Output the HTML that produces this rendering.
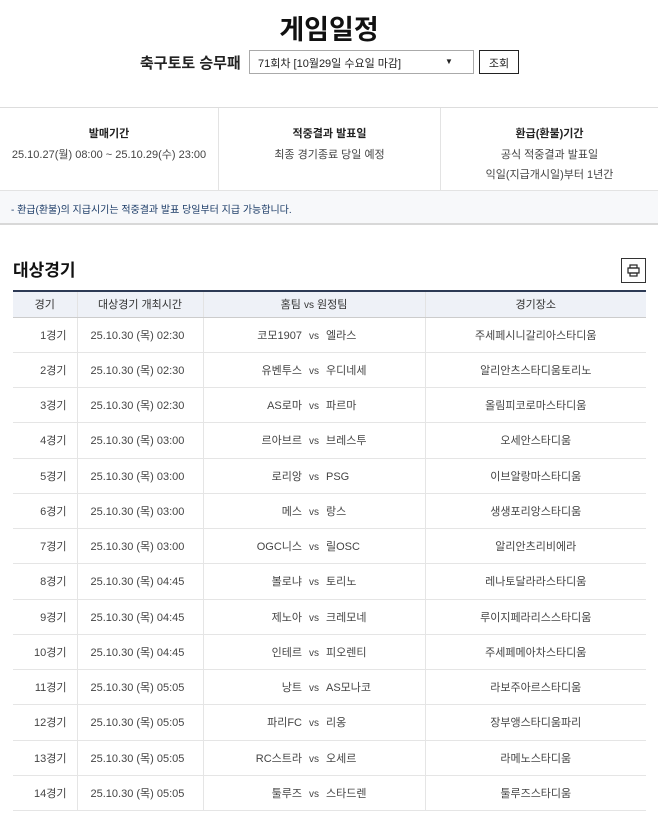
<!DOCTYPE html>
<html><head><meta charset="utf-8">
<style>
*{margin:0;padding:0;box-sizing:border-box}
body{width:658px;height:814px;overflow:hidden;background:#fff;font-family:"Liberation Sans","Noto Sans CJK KR",sans-serif;color:#333;font-size:11px}
h1{position:absolute;top:8px;left:0;width:658px;text-align:center;font-size:27px;font-weight:bold;color:#111}
.info{position:absolute;top:107px;left:0;width:658px;height:83px;border-top:1px solid #ddd;display:flex}
.info div{flex:none;text-align:center;padding-top:16px;line-height:20px;color:#444}
.info b{display:block;color:#222;margin-bottom:1px}
.note{position:absolute;top:190px;left:0;width:658px;height:35px;background:#f7f8fa;border-top:1px solid #e3e3e3;border-bottom:2px solid #d8d8d8;padding:10px 0 0 11px;font-size:10px;color:#1a3a66}
h2{position:absolute;top:256px;left:13px;font-size:17px;font-weight:bold;color:#111}
.pr{position:absolute;left:621px;top:258px;width:25px;height:25px;border:1px solid #333;background:#fff}
table{position:absolute;top:290px;left:13px;width:633px;border-collapse:collapse;table-layout:fixed}
th{background:#eef1f7;height:26px;font-weight:normal;color:#333;border-top:2px solid #2d3a55;border-left:1px solid #e3e3e3;border-bottom:1px solid #ccc}
td{height:35.25px;border-bottom:1px solid #e5e5e5;border-left:1px solid #e5e5e5;text-align:center;color:#444}
th:first-child,td:first-child{border-left:none}
td:first-child{text-align:right;padding-right:10px}
td:nth-child(2){text-align:left;padding-left:13px}
.h{display:inline-block;width:97px;text-align:right}.v{display:inline-block;width:24px;text-align:center;font-size:10px}.a{display:inline-block;width:97px;text-align:left}
</style></head><body>
<h1>게임일정</h1>
<div style="position:absolute;top:52px;left:140px;font-size:15px;font-weight:bold;color:#222">축구토토 승무패</div>
<div style="position:absolute;top:50px;left:249px;width:225px;height:24px;border:1px solid #aaa;padding:4px 0 0 8px;color:#222">71회차 [10월29일 수요일 마감]<span style="position:absolute;left:195px;top:6px;font-size:8px">▼</span></div>
<div style="position:absolute;top:50px;left:479px;width:40px;height:24px;border:1px solid #222;text-align:center;padding-top:4px;color:#222">조회</div>
<div class="info">
<div style="width:219px;border-right:1px solid #e3e3e3"><b>발매기간</b>25.10.27(월) 08:00 ~ 25.10.29(수) 23:00</div>
<div style="width:222px;border-right:1px solid #e3e3e3"><b>적중결과 발표일</b>최종 경기종료 당일 예정</div>
<div style="width:217px"><b>환급(환불)기간</b>공식 적중결과 발표일<br>익일(지급개시일)부터 1년간</div>
</div>
<div class="note">- 환급(환불)의 지급시기는 적중결과 발표 당일부터 지급 가능합니다.</div>
<h2>대상경기</h2>
<div class="pr"><svg width="23" height="23" viewBox="0 0 23 23"><rect x="8" y="6" width="7" height="3" fill="none" stroke="#222" stroke-width="1.2"/><rect x="6" y="9" width="11" height="5" fill="none" stroke="#222" stroke-width="1.2"/><rect x="8" y="14" width="7" height="3" fill="none" stroke="#222" stroke-width="1.2"/></svg></div>
<table>
<colgroup><col style="width:64px"><col style="width:126px"><col style="width:222px"><col style="width:221px"></colgroup>
<tr><th style="height:25px">경기</th><th>대상경기 개최시간</th><th>홈팀 <span style="font-size:10px">vs</span> 원정팀</th><th>경기장소</th></tr>
<tr><td>1경기</td><td>25.10.30 (목) 02:30</td><td><span class="h">코모1907</span><span class="v">vs</span><span class="a">엘라스</span></td><td>주세페시니갈리아스타디움</td></tr>
<tr><td>2경기</td><td>25.10.30 (목) 02:30</td><td><span class="h">유벤투스</span><span class="v">vs</span><span class="a">우디네세</span></td><td>알리안츠스타디움토리노</td></tr>
<tr><td>3경기</td><td>25.10.30 (목) 02:30</td><td><span class="h">AS로마</span><span class="v">vs</span><span class="a">파르마</span></td><td>올림피코로마스타디움</td></tr>
<tr><td>4경기</td><td>25.10.30 (목) 03:00</td><td><span class="h">르아브르</span><span class="v">vs</span><span class="a">브레스투</span></td><td>오세안스타디움</td></tr>
<tr><td>5경기</td><td>25.10.30 (목) 03:00</td><td><span class="h">로리앙</span><span class="v">vs</span><span class="a">PSG</span></td><td>이브알랑마스타디움</td></tr>
<tr><td>6경기</td><td>25.10.30 (목) 03:00</td><td><span class="h">메스</span><span class="v">vs</span><span class="a">랑스</span></td><td>생생포리앙스타디움</td></tr>
<tr><td>7경기</td><td>25.10.30 (목) 03:00</td><td><span class="h">OGC니스</span><span class="v">vs</span><span class="a">릴OSC</span></td><td>알리안츠리비에라</td></tr>
<tr><td>8경기</td><td>25.10.30 (목) 04:45</td><td><span class="h">볼로냐</span><span class="v">vs</span><span class="a">토리노</span></td><td>레나토달라라스타디움</td></tr>
<tr><td>9경기</td><td>25.10.30 (목) 04:45</td><td><span class="h">제노아</span><span class="v">vs</span><span class="a">크레모네</span></td><td>루이지페라리스스타디움</td></tr>
<tr><td>10경기</td><td>25.10.30 (목) 04:45</td><td><span class="h">인테르</span><span class="v">vs</span><span class="a">피오렌티</span></td><td>주세페메아차스타디움</td></tr>
<tr><td>11경기</td><td>25.10.30 (목) 05:05</td><td><span class="h">낭트</span><span class="v">vs</span><span class="a">AS모나코</span></td><td>라보주아르스타디움</td></tr>
<tr><td>12경기</td><td>25.10.30 (목) 05:05</td><td><span class="h">파리FC</span><span class="v">vs</span><span class="a">리옹</span></td><td>장부앵스타디움파리</td></tr>
<tr><td>13경기</td><td>25.10.30 (목) 05:05</td><td><span class="h">RC스트라</span><span class="v">vs</span><span class="a">오세르</span></td><td>라메노스타디움</td></tr>
<tr><td>14경기</td><td>25.10.30 (목) 05:05</td><td><span class="h">툴루즈</span><span class="v">vs</span><span class="a">스타드렌</span></td><td>툴루즈스타디움</td></tr>
</table>
</body></html>
